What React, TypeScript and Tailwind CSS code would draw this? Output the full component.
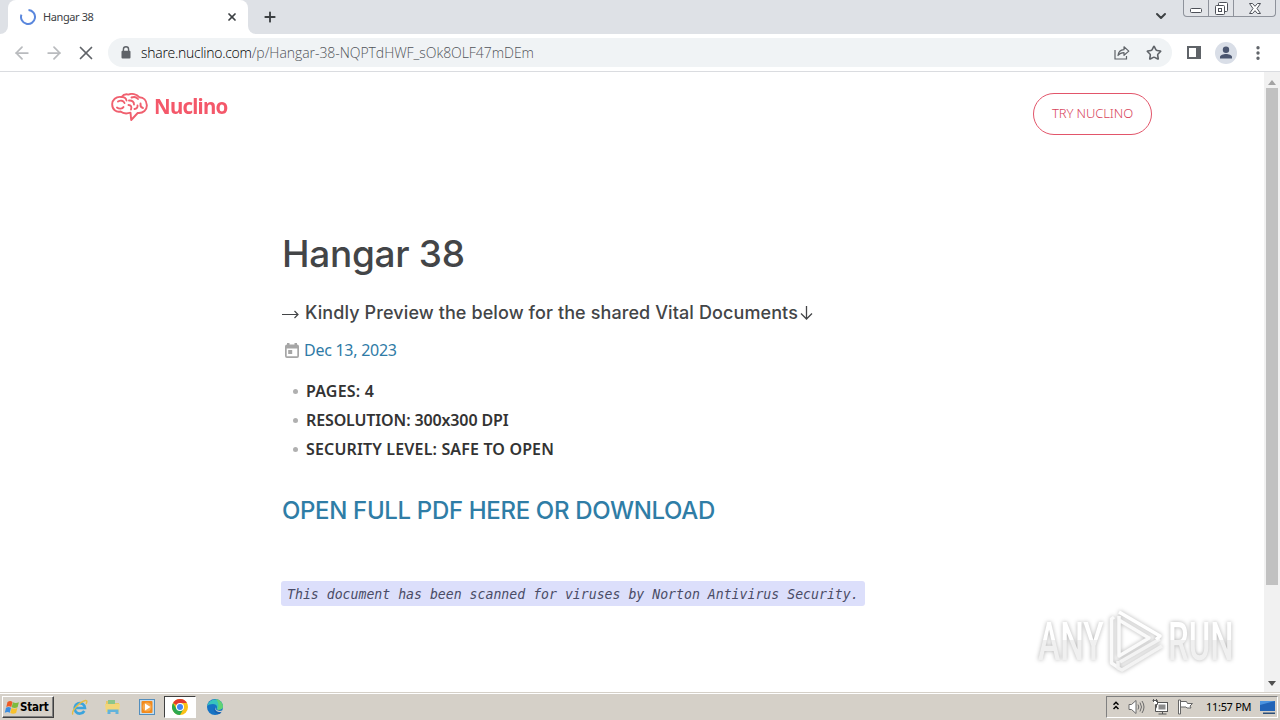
import type { ReactNode } from "react";
import {
  ArrowLeft,
  ArrowRight,
  ChevronDown,
  MoreVertical,
  Plus,
  Star,
  X,
} from "lucide-react";

const details = [
  { id: "pages", text: "PAGES: 4", className: "tracking-[0.2px]" },
  { id: "resolution", text: "RESOLUTION: 300x300 DPI", className: "tracking-[-0.13px]" },
  { id: "security", text: "SECURITY LEVEL: SAFE TO OPEN", className: "tracking-[0.15px]" },
];

function LockIcon() {
  return (
    <svg width="10" height="13" viewBox="0 0 10 13" className="shrink-0">
      <path d="M2.4 5.5V3.4a2.6 2.6 0 0 1 5.2 0v2.1" fill="none" stroke="#5f6368" strokeWidth="1.4" />
      <rect x="0.5" y="4.8" width="9" height="7.7" rx="1" fill="#5f6368" />
    </svg>
  );
}

function ShareIcon() {
  return (
    <svg width="16" height="15" viewBox="0 0 16 15" fill="none" stroke="#5f6368" strokeWidth="1.2">
      <path d="M1 5v9h11.5v-3" />
      <path d="M4 10.5c.4-3.6 2.5-5.6 6-5.8V1.8l4.8 4.3-4.8 4.2V7.6C7.4 7.6 5.5 8.4 4 10.5Z" strokeLinejoin="round" />
    </svg>
  );
}

/** Caption buttons hanging from the top right corner of the window. */
function WindowButtons() {
  return (
    <div className="flex h-[17px] w-[93px] rounded-b border border-t-0 border-[#8e929b] bg-[#e2e4e8] text-[#4d5058]">
      <div className="flex w-[25px] items-center justify-center border-r border-[#8e929b]">
        <svg width="12" height="5" viewBox="0 0 12 5" className="mt-1">
          <rect x="0.5" y="0.5" width="11" height="4" rx="1" fill="#fff" stroke="currentColor" />
        </svg>
      </div>
      <div className="flex w-[25px] items-center justify-center border-r border-[#8e929b]">
        <svg width="13" height="13" viewBox="0 0 13 13" fill="#fff" stroke="currentColor">
          <rect x="3.5" y="0.5" width="9" height="9" rx="1" />
          <rect x="0.5" y="3.5" width="9" height="9" rx="1" />
          <rect x="3.5" y="6.5" width="3" height="3" />
        </svg>
      </div>
      <div className="flex flex-1 items-center justify-center">
        <svg width="12" height="11" viewBox="0 0 12 11" fill="#fff" stroke="currentColor">
          <path d="M.5.5h3L6 3.3 8.5.5h3L8 5.5l3.5 5h-3L6 7.7l-2.5 2.8h-3L4 5.5Z" />
        </svg>
      </div>
    </div>
  );
}

function TabStrip() {
  return (
    <div className="flex h-[34px] shrink-0 bg-[#dee1e6]">
      <div className="flex h-full w-2 bg-white">
        <div className="h-full w-2 rounded-br-lg bg-[#dee1e6]" />
      </div>
      <div className="flex h-full w-60 items-center rounded-t-lg bg-white pr-2.5 pl-3">
        <svg width="16" height="16" viewBox="0 0 16 16" className="shrink-0">
          <path d="M8.5 1A7 7 0 1 1 1.400 5.700" fill="none" stroke="#5a87dd" strokeWidth="2" />
        </svg>
        <span className="ml-[7px] flex-1 whitespace-nowrap font-['Noto_Sans',sans-serif] text-[11px] tracking-[-0.4px] text-[#3c4043]">
          Hangar 38
        </span>
        <X className="size-3 text-[#3c4043]" strokeWidth={3.5} />
      </div>
      <div className="flex h-full w-2 bg-white">
        <div className="h-full w-2 rounded-bl-lg bg-[#dee1e6]" />
      </div>
      <div className="flex flex-1 items-center pl-1.5">
        <Plus className="size-4 text-[#3c4043]" strokeWidth={2.8} />
      </div>
      <div className="flex">
        <ChevronDown className="mt-2 mr-[14px] size-4 text-[#3c4043]" strokeWidth={3} />
        <WindowButtons />
        <div className="w-1" />
      </div>
    </div>
  );
}

function Toolbar() {
  return (
    <div className="flex h-[38px] shrink-0 items-center border-b border-[#dadce0] bg-white">
      <ArrowLeft className="ml-[12px] size-[20px] text-[#b9bbbe]" strokeWidth={2.1} />
      <ArrowRight className="ml-[12px] size-[20px] text-[#b9bbbe]" strokeWidth={2.1} />
      <X className="ml-[11px] size-[22px] text-[#5f6368]" strokeWidth={1.9} />
      <div className="ml-[11px] flex h-[29px] w-[1064px] items-center rounded-full bg-[#f0f3f5] pr-[10px] pl-[13px]">
        <LockIcon />
        <div className="ml-[10px] flex flex-1 whitespace-nowrap font-['Open_Sans',sans-serif] text-[14px] font-light">
          <span className="tracking-[-0.27px] text-black">share.nuclino.com</span>
          <span className="tracking-[-0.05px] text-[#505459]">/p/Hangar-38-NQPTdHWF_sOk8OLF47mDEm</span>
        </div>
        <ShareIcon />
        <Star className="ml-[16px] size-[16px] text-[#5f6368]" strokeWidth={2.4} />
      </div>
      <svg width="14" height="13" viewBox="0 0 14 13" className="ml-[15px]">
        <rect x="1" y="1" width="12" height="11" fill="none" stroke="#5f6368" strokeWidth="2" />
        <rect x="9" y="0" width="5" height="13" fill="#5f6368" />
      </svg>
      <svg width="22" height="22" viewBox="0 0 22 22" className="ml-[14px]">
        <circle cx="11" cy="11" r="11" fill="#d9dee7" />
        <circle cx="11" cy="7.7" r="3.2" fill="#4b5670" />
        <path d="M5 16.500v-1.400C5 13 8.500 12 11 12s6 1 6 3.100v1.400Z" fill="#4b5670" />
      </svg>
      <MoreVertical className="ml-3 size-[18px] text-[#5f6368]" fill="currentColor" strokeWidth={2.5} />
    </div>
  );
}

function BrainLogo() {
  return (
    <svg
      width="37"
      height="29"
      viewBox="0 0 37 29"
      fill="none"
      stroke="#f0606f"
      strokeWidth="1.9"
      strokeLinecap="round"
      strokeLinejoin="round"
      className="mt-[1.5px]"
    >
      <path d="M10.500 4C5 3 1 7 1.200 11.500c0 5 4 8 8.300 7 2.500 2 6.500 2.300 10 1.200l.7 7.300 6.500-7c5.500.6 9.500-3.300 9.100-8C35.500 7.300 32.500 4.400 28.500 4.300 25.500 1 20.500.2 17.500 1.600 14.500.8 12 2 10.500 4Z" />
      <path d="M10.500 4c2.500-.2 4.700 1.200 5 3.500M7 8.500c2.500-1.500 5.500-1 6.500 1.500M6 14.500c2 1.600 5.500 1.500 6.500-.5" />
      <path d="M18 7.500c3.500-.2 5 1.500 5 4M17.500 12c2.500 0 3.500 1.800 2.500 4.500M23.500 16c2.200-.2 3.300-1.600 3-3.500" />
      <path d="M20.500 4.500c2.500-1 5-.5 6.500 1.500M29.500 10.500c-.3 2.500.5 4 2.500 4.500" />
    </svg>
  );
}

function PageHeader() {
  return (
    <header className="flex h-[80px] items-start pt-[19px] pr-[112px] pl-[111px]">
      <BrainLogo />
      <span className="-mt-px ml-[6px] flex-1 origin-left scale-x-[0.93] font-['Noto_Sans',sans-serif] text-[22px] leading-[30px] font-bold tracking-[-0.8px] text-[#f4586a]">
        Nuclino
      </span>
      <a
        href="#"
        className="mt-[2px] flex h-[42px] w-[119px] items-center justify-center rounded-full border border-[#e2556a] font-['Noto_Sans',sans-serif] text-[13px] font-light tracking-[-0.1px] text-[#d8455c]"
      >
        TRY NUCLINO
      </a>
    </header>
  );
}

function CalendarIcon() {
  return (
    <svg width="14" height="15" viewBox="0 0 14 15">
      <path d="M2 0h2.500v1.500h5V0H12v1.500A2 2 0 0 1 14 3.500v9.500a2 2 0 0 1-2 2H2a2 2 0 0 1-2-2V3.500A2 2 0 0 1 2 1.500ZM1.700 5.500v7.700h10.600V5.500Z" fill="#a6a6a6" fillRule="evenodd" />
      <rect x="3.2" y="7" width="4" height="4" fill="#a6a6a6" />
    </svg>
  );
}

function Article() {
  return (
    <article className="flex flex-col items-start pt-[78px] pl-[282px] text-[#434547]">
      <h1 className="h-[48px] whitespace-nowrap font-[Inter,sans-serif] text-[37px] leading-[48px] font-medium tracking-[-0.3px]">
        Hangar 38
      </h1>
      <h3 className="mt-[22px] flex h-[26px] items-center whitespace-nowrap font-[Inter,sans-serif] text-[18px] leading-[26px] font-medium tracking-[0.1px]">
        <svg width="17" height="9" viewBox="0 0 17 9" fill="none" stroke="currentColor" strokeWidth="1.2" className="mt-0.5 mr-[6px]">
          <path d="M0 4.500h16M12.500 1 16 4.500 12.500 8" />
        </svg>
        Kindly Preview the below for the shared Vital Documents
        <svg width="13" height="14" viewBox="0 0 13 14" fill="none" stroke="currentColor" strokeWidth="1.3" className="ml-[2px]">
          <path d="M6.500 0v13M1 7.500 6.500 13 12 7.500" />
        </svg>
      </h3>
      <div className="mt-[11px] flex h-[26px] items-center pl-[3px]">
        <CalendarIcon />
        <a href="#" className="ml-[5px] whitespace-nowrap font-['Noto_Sans',sans-serif] text-[16px] leading-[26px] tracking-[-0.27px] text-[#2f7ba6]">
          Dec 13, 2023
        </a>
      </div>
      <ul className="mt-[14px] pl-[11px]">
        {details.map((item) => (
          <li key={item.id} className="flex h-[29px] items-center">
            <span className="mr-[8px] size-[5px] rounded-full bg-[#b0b0b0]" />
            <span className={`whitespace-nowrap font-['Noto_Sans',sans-serif] text-[16px] leading-[29px] font-semibold text-[#333] ${item.className}`}>
              {item.text}
            </span>
          </li>
        ))}
      </ul>
      <a href="#" className="mt-[30px] h-[34px] whitespace-nowrap font-[Inter,sans-serif] text-[24px] leading-[34px] font-medium tracking-[-0.34px] text-[#2f7da6]">
        OPEN FULL PDF HERE OR DOWNLOAD
      </a>
      <code className="mt-[53px] -ml-px flex h-[25px] w-[584px] items-center rounded-[3px] bg-[#dcdffb] pt-[3px] pl-[6px] whitespace-nowrap font-['DejaVu_Sans_Mono',monospace] text-[13.2px] text-[#4a4c66] italic">
        This document has been scanned for viruses by Norton Antivirus Security.
      </code>
    </article>
  );
}

function Scrollbar() {
  return (
    <div className="flex h-full w-4 shrink-0 flex-col items-center bg-[#f1f1f1]">
      <div className="flex h-4 items-center justify-center pt-1">
        <svg width="8" height="5" viewBox="0 0 8 5">
          <path d="M0 5h8L4 0Z" fill="#a3a3a3" />
        </svg>
      </div>
      <div className="h-[497px] w-3 bg-[#c1c1c1]" />
      <div className="flex-1" />
      <div className="flex h-[18px] items-center justify-center">
        <svg width="8" height="5" viewBox="0 0 8 5">
          <path d="M0 0h8L4 5Z" fill="#505050" />
        </svg>
      </div>
    </div>
  );
}

/** Translucent sandbox mark laid over the lower right of the page. */
function Watermark() {
  return (
    <div className="absolute top-[534px] left-[1038px] flex h-[68px] w-[196px] items-center drop-shadow-[0_0_2px_rgba(0,0,0,0.3)]">
      <span className="-mr-[44px] w-[110px] shrink-0 origin-left scale-x-[0.63] bg-linear-to-b from-white from-50% to-[#f0f0f0] to-50% bg-clip-text pt-1 font-[Roboto,sans-serif] text-[53px] leading-[66px] font-medium text-transparent">
        ANY
      </span>
      <svg width="60" height="66" viewBox="0 0 60 66" fill="none" strokeLinejoin="round" className="shrink-0">
        <path d="M10 10 7.500 12v44l6 4" stroke="#fafafa" strokeWidth="3.5" />
        <path d="M58 39 18 63l-4-2V54" stroke="#f3f3f3" strokeWidth="3.5" />
        <path d="M16 55 56 32" stroke="#f3f3f3" strokeWidth="3.5" />
        <path d="M15 9v40L45 31 15 13" stroke="#fafafa" strokeWidth="3.5" />
        <path d="m15 5 41 24-4 3.500" stroke="#fff" strokeWidth="3.5" />
      </svg>
      <span className="-mr-[44px] ml-[4px] w-[110px] shrink-0 origin-left scale-x-[0.62] bg-linear-to-b from-white from-50% to-[#f0f0f0] to-50% bg-clip-text pt-1 font-[Roboto,sans-serif] text-[53px] leading-[66px] font-medium text-transparent">
        RUN
      </span>
    </div>
  );
}

function ChromeIcon() {
  return (
    <svg width="16" height="16" viewBox="0 0 16 16">
      <circle cx="8" cy="8" r="8" fill="#fbc116" />
      <path d="M8 8 1.070 4A8 8 0 0 1 14.930 4H8Z" fill="#e33b2e" />
      <path d="M1.070 4A8 8 0 0 0 8 16l3.460-6L8 8 4.540 10Z" fill="#2da94f" />
      <circle cx="8" cy="8" r="4" fill="#fff" />
      <circle cx="8" cy="8" r="3" fill="#4285f4" />
    </svg>
  );
}

function ExplorerIcon() {
  return (
    <svg width="17" height="17" viewBox="0 0 17 17" fill="none">
      <path d="M13.300 12a5.200 5.200 0 1 1 .7-3H4.500" stroke="#3ba4dd" strokeWidth="2.6" />
      <path d="M2 15.500C-.5 12.500 9 2.500 14.500 1.500c2-.3 1.500 2 .5 3.500" stroke="#e5bd45" strokeWidth="1.4" />
    </svg>
  );
}

function FolderIcon() {
  return (
    <svg width="16" height="16" viewBox="0 0 16 16">
      <path d="M1 2h5l1 2h7v9H1Z" fill="#e9c766" />
      <path d="M3 1h7v5H3Z" fill="#8bc58a" />
      <path d="M0 5h15l-1 8H1Z" fill="#f2d679" />
      <path d="M2.500 15v-4.500h11V15h-3v-2h-5v2Z" fill="#62b3dc" />
    </svg>
  );
}

function MediaIcon() {
  return (
    <svg width="16" height="16" viewBox="0 0 16 16">
      <rect x="0.5" y="0.5" width="15" height="15" fill="#c5ddee" stroke="#538ebd" />
      <rect x="2.5" y="2" width="11" height="12" rx="1" fill="#f28a1c" />
      <circle cx="8" cy="8" r="4.5" fill="#f7a94d" />
      <path d="M6 4.500v7L11.500 8Z" fill="#fff" />
    </svg>
  );
}

function EdgeIcon() {
  return (
    <svg width="16" height="16" viewBox="0 0 16 16">
      <circle cx="8" cy="8" r="8" fill="#1673c4" />
      <path d="M.2 7A8 8 0 0 1 16 7.500c0 3-4.500 4-6.500 2.500C11 8 9.500 5 6 5 3.500 5 1 5.800.2 7Z" fill="#38c4bd" />
      <path d="M9 .1A8 8 0 0 1 16 7.500c0 2.600-3.500 3.800-5.700 3C12 8 12 4 9 .1Z" fill="#61d275" />
      <path d="M7.500 8c-1 3 2 6 7 5.300-.6.900-1.300 1.400-2 1.700C8 15 5.500 10.500 7.500 8Z" fill="#1b5fae" />
      <path d="M8.500 8c-.6 2.600 2.500 4.800 6.800 3.500l-.8 1.500C10.500 13.500 7 11 8.500 8Z" fill="#d5d0c8" />
    </svg>
  );
}

function StartFlag() {
  return (
    <svg width="16" height="15" viewBox="0 0 16 15">
      <path d="M3.500 2c2-1.300 3.500-1.300 5 0L7.300 7C5.600 6 4.100 6 2.300 7Z" fill="#ee5a24" />
      <path d="M8.900 2.200c1.800 1 3.800 1 6 0l-1.300 5c-2 1-4 1-5.900 0Z" fill="#7dbb3c" />
      <path d="M2 7.700c1.800-1 3.300-1 5 0l-1.200 5c-1.500-1-3-1-5 0Z" fill="#3b8de0" />
      <path d="M7.500 7.900c1.800 1 3.800 1 5.900 0l-1.300 5c-2 1-4 1-5.800 0Z" fill="#f8c12c" />
    </svg>
  );
}

function TaskButton({ children }: { children: ReactNode }) {
  return <div className="flex h-[22px] w-[34px] items-center justify-center">{children}</div>;
}

function Tray() {
  return (
    <div className="flex h-[22px] w-[172px] items-center border border-t-[#808080] border-r-white border-b-white border-l-[#808080] pl-[6px]">
      <svg width="6" height="9" viewBox="0 0 6 9" fill="none" stroke="#000" strokeWidth="1.5" className="-mt-[3px]">
        <path d="m.5 3.800 2.500-2.500 2.500 2.500M.5 8 3 5.500 5.500 8" />
      </svg>
      <svg width="17" height="16" viewBox="0 0 17 16" fill="none" stroke="#6b6b6b" className="ml-[9px]">
        <path d="M1 5.500h2.500L8 1.500v13l-4.500-4H1Z" fill="#fff" />
        <path d="M10 5.500q1.600 2.500 0 5M12 3.500q3 4.500 0 9M14 2q4 6 0 12" />
      </svg>
      <svg width="17" height="16" viewBox="0 0 17 16" stroke="#555" className="ml-[7px]">
        <rect x="4.5" y="3.5" width="11" height="9" fill="#fff" />
        <rect x="6.5" y="5.5" width="7" height="5" fill="#8b8b8b" stroke="none" />
        <path d="M6.500 15h8M10.500 13v2" />
        <path d="M.5 1.500h5v4h-2v7h3" fill="#fff" />
        <path d="M1.500 0v3M4.500 0v3" />
      </svg>
      <svg width="16" height="16" viewBox="0 0 16 16" stroke="#666" className="ml-[8px]">
        <path d="M3.500 2.500h6l1 2h5l-2.500 2.500 1 2h-4l-1-1h-5.500Z" fill="#fff" />
        <path d="M1.500 1v14h2V1Z" fill="#fff" />
      </svg>
      <span className="ml-[13px] w-[47px] whitespace-nowrap font-['Noto_Sans',sans-serif] text-[11px] leading-[14px] tracking-[-0.3px] text-black">
        11:57 PM
      </span>
      <svg width="15" height="13" viewBox="0 0 15 13" className="ml-[7px]">
        <rect width="15" height="10" fill="#2264b7" />
        <path d="M0 10V4l15-4H0Z" fill="#4c94df" />
        <path d="M3 11.500h12v1.500H3Z" fill="#2b4e78" />
      </svg>
    </div>
  );
}

function Taskbar() {
  return (
    <footer className="flex h-[28px] shrink-0 flex-col border-t border-[#d5d0c8] bg-[#d5d0c8]">
      <div className="h-px bg-white" />
      <div className="flex flex-1 items-center justify-between pr-0.5 pl-0.5">
        <div className="flex items-center">
          <button className="mr-[8px] flex h-[22px] w-[52px] items-center border border-t-white border-r-[#404040] border-b-[#404040] border-l-white pl-px shadow-[inset_-1px_-1px_0_#808080]">
            <StartFlag />
            <span className="mt-px font-['DejaVu_Sans_Condensed','DejaVu_Sans',sans-serif] text-[11.5px] font-bold tracking-[-0.2px] text-black">
              Start
            </span>
          </button>
          <TaskButton>
            <ExplorerIcon />
          </TaskButton>
          <TaskButton>
            <FolderIcon />
          </TaskButton>
          <TaskButton>
            <MediaIcon />
          </TaskButton>
          <div className="mr-[2px] flex h-[22px] w-[32px] items-center justify-center border border-t-[#404040] border-r-white border-b-white border-l-[#404040] bg-white">
            <ChromeIcon />
          </div>
          <TaskButton>
            <EdgeIcon />
          </TaskButton>
        </div>
        <Tray />
      </div>
    </footer>
  );
}

export default function App() {
  return (
    <div className="flex h-[720px] w-[1280px] flex-col overflow-hidden bg-white">
      <TabStrip />
      <Toolbar />
      <main className="relative flex min-h-0 flex-1">
        <div className="flex-1">
          <PageHeader />
          <Article />
        </div>
        <Scrollbar />
        <Watermark />
      </main>
      <Taskbar />
    </div>
  );
}
